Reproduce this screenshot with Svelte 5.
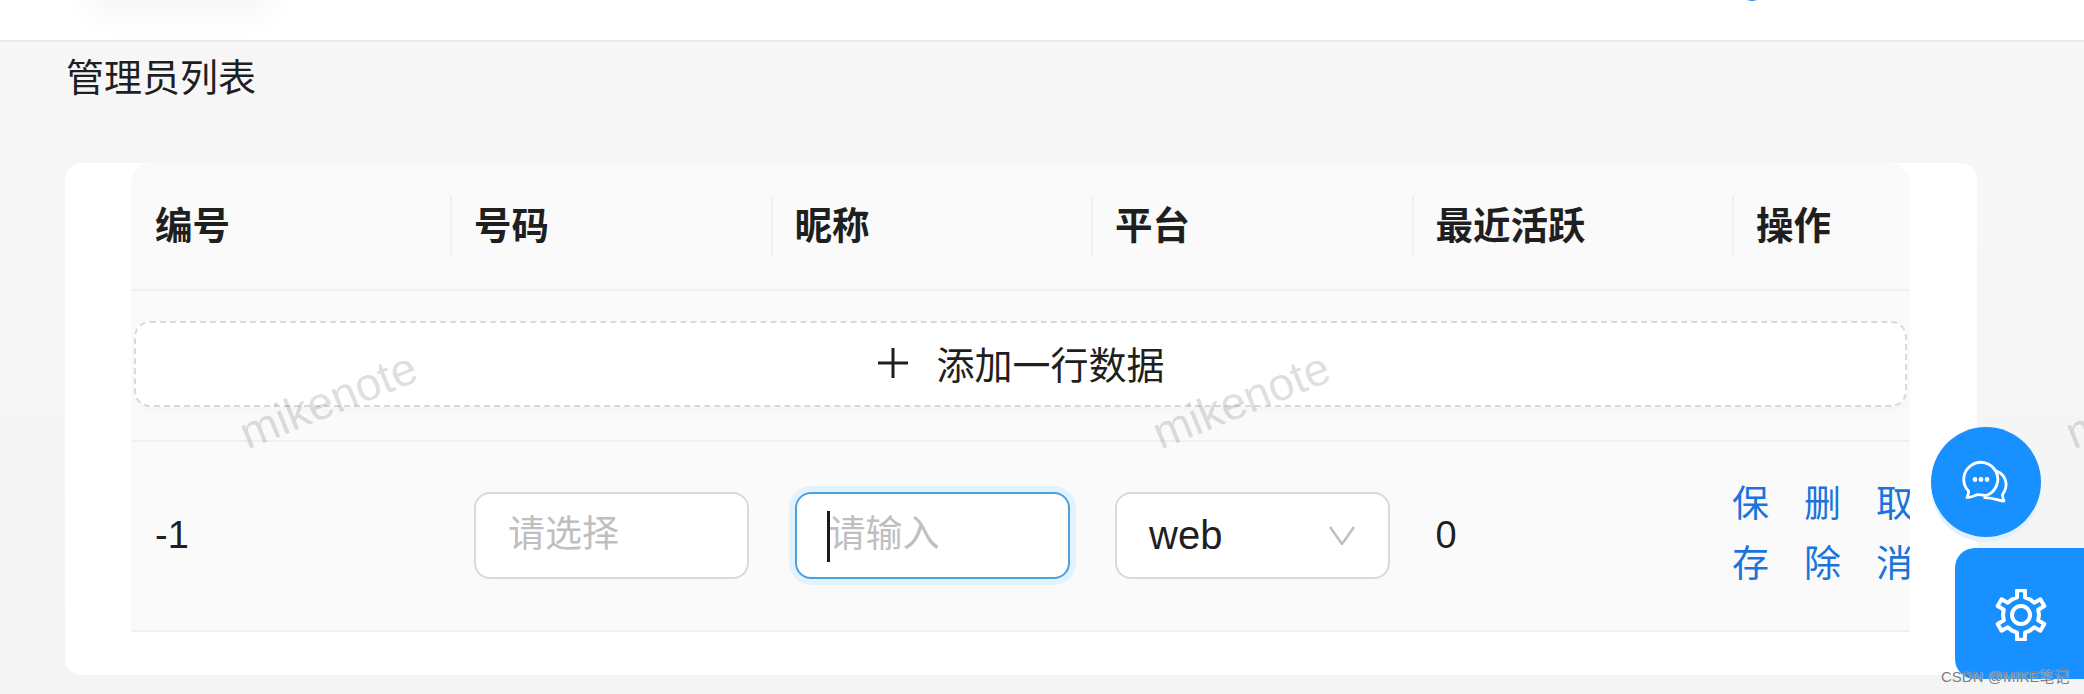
<script>
  const columns = ['编号', '号码', '昵称', '平台', '最近活跃', '操作'];
  const actions = ['保存', '删除', '取消'];
  const marks = [0, 1, 2];

  // six toothed cog outline, centre 26,26
  function gearPath() {
    const pts = [];
    for (let i = 0; i < 6; i++) {
      const a = -90 + i * 60;
      [[-30, 18], [-13, 18], [-9, 25], [9, 25], [13, 18]].forEach(([off, r]) => {
        const t = ((a + off) * Math.PI) / 180;
        pts.push((26 + r * Math.cos(t)).toFixed(1) + ' ' + (26 + r * Math.sin(t)).toFixed(1));
      });
    }
    return 'M' + pts.join('L') + 'Z';
  }
</script>

<div class="page">
  <header class="topbar">
    <div class="logo"></div>
    <div class="avatar"></div>
  </header>

  <main class="content">
    <h1>管理员列表</h1>

    <section class="card">
      <div class="table">
        <div class="row head">
          {#each columns as col, i}
            <div class="th" class:first={i === 0}>{col}</div>
          {/each}
        </div>

        <div class="add-wrap">
          <button class="add">
            <svg width="34" height="34" viewBox="0 0 34 34" aria-hidden="true">
              <path d="M17 2v30M2 17h30" stroke="#1f1f1f" stroke-width="3" fill="none" />
            </svg>
            <span>添加一行数据</span>
          </button>
        </div>

        <div class="row body">
          <div class="td">-1</div>
          <div class="td"><input class="field" placeholder="请选择" readonly /></div>
          <div class="td">
            <div class="focus-wrap">
              <input class="field focused" placeholder="请输入" readonly />
              <span class="caret"></span>
            </div>
          </div>
          <div class="td">
            <div class="field select">
              <span>web</span>
              <svg width="26" height="19" viewBox="0 0 26 19" aria-hidden="true">
                <path d="M1 1l12 17L25 1" stroke="#bfbfbf" stroke-width="2.5" fill="none" />
              </svg>
            </div>
          </div>
          <div class="td">0</div>
          <div class="td ops">
            {#each actions as a}
              <a href="#top">{a}</a>
            {/each}
          </div>
        </div>
      </div>
    </section>
  </main>

  {#each marks as m}
    <div class="watermark" style="left: {m * 913 + 220}px">mikenote</div>
  {/each}

  <button class="fab chat" aria-label="消息">
    <svg width="48" height="48" viewBox="0 0 48 48" fill="none" stroke="#fff" stroke-width="2.8" stroke-linejoin="round" stroke-linecap="round">
      <path d="M7.7 33.3A17 17 0 1 1 25 37.5C21 37.2 17 35.6 14 37.5C11 39 8 39.5 6 39.5C7 37.5 7.6 35.5 7.7 33.3Z" />
      <path d="M35.3 13A15 15 0 0 1 45 24.7C45.5 30 43.5 34 41.5 36.5C41.5 38.5 42 41 43 43C38 42.8 34 40 23.7 39.7" />
      <circle cx="14" cy="21.5" r="1" fill="#fff" />
      <circle cx="20" cy="21.5" r="1" fill="#fff" />
      <circle cx="26" cy="21.5" r="1" fill="#fff" />
    </svg>
  </button>
  <button class="fab gear" aria-label="设置">
    <svg width="52" height="52" viewBox="0 0 52 52" fill="none" stroke="#fff" stroke-width="4" stroke-linejoin="round">
      <path d={gearPath()} />
      <circle cx="26" cy="26" r="9" />
    </svg>
  </button>

  <div class="credit">CSDN @MIKE笔记</div>
</div>

<style>
  :global(body) {
    margin: 0;
    background: #f5f5f5;
  }
  .page {
    position: relative;
    width: 2084px;
    height: 694px;
    overflow: hidden;
    background: linear-gradient(#f7f7f7, #f4f4f4);
    color: #1f1f1f;
    font-family: "Liberation Sans", "Noto Sans CJK SC", sans-serif;
  }
  .topbar {
    position: relative;
    height: 40px;
    background: #fff;
    border-bottom: 2px solid #ececec;
    overflow: hidden;
  }
  .logo {
    position: absolute;
    left: 90px;
    top: -30px;
    width: 180px;
    height: 30px;
    box-shadow: 0 12px 34px rgba(0, 0, 0, 0.05);
  }
  .avatar {
    position: absolute;
    left: 1740px;
    top: -23px;
    width: 24px;
    height: 24px;
    border-radius: 50%;
    background: #3d8fdc;
  }
  .content {
    padding-left: 65px;
  }
  h1 {
    margin: 0 0 51px 1px;
    height: 70px;
    line-height: 72px;
    font-size: 38px;
    font-weight: 400;
  }
  .card {
    width: 1912px;
    height: 512px;
    padding: 0 67px 0 66px;
    box-sizing: border-box;
    background: #fff;
    border-radius: 16px;
  }
  .table {
    width: 1779px;
    background: #fafafa;
    border-radius: 20px 20px 0 0;
    overflow: hidden;
  }
  .row {
    display: grid;
    grid-template-columns: 319px repeat(4, 320.5px) 178px;
    align-items: center;
  }
  .head {
    height: 126px;
    border-bottom: 2px solid #f0f0f0;
    font-size: 37.5px;
    font-weight: 700;
  }
  .th {
    height: 61px;
    line-height: 61px;
    padding-left: 22px;
    border-left: 2px solid #f0f0f0;
    margin-top: 1px;
  }
  .th.first {
    border-left-color: transparent;
  }
  .add-wrap {
    padding: 30px 3px 33px;
    border-bottom: 2px solid #f0f0f0;
    height: 86px;
  }
  .add {
    display: flex;
    align-items: center;
    justify-content: center;
    gap: 26px;
    width: 100%;
    height: 86px;
    box-sizing: border-box;
    background: #fff;
    border: 2px dashed #d9d9d9;
    border-radius: 16px;
    box-shadow: 0 4px 6px rgba(0, 0, 0, 0.02);
    font: inherit;
    font-size: 38px;
    color: #1f1f1f;
    padding: 0 0 3px;
  }
  .body {
    height: 188px;
    border-bottom: 2px solid #f0f0f0;
    font-size: 38px;
  }
  .td {
    padding-left: 24px;
    margin-top: -2px;
  }
  .field {
    display: block;
    width: 275px;
    height: 87px;
    box-sizing: border-box;
    padding: 0 32px;
    background: #fff;
    border: 2px solid #d9d9d9;
    border-radius: 16px;
    font: inherit;
    font-size: 37px;
    color: #1f1f1f;
    outline: none;
  }
  .field::placeholder {
    color: #bfbfbf;
  }
  .focus-wrap {
    position: relative;
    width: 275px;
  }
  .focused {
    border-color: #4f9fdc;
    box-shadow: 0 0 0 6px #e2f2fe;
  }
  .caret {
    position: absolute;
    left: 32px;
    top: 19px;
    width: 3px;
    height: 51px;
    background: #1a1a1a;
  }
  .select {
    display: flex;
    align-items: center;
    justify-content: space-between;
    padding-right: 33px;
    font-size: 40px;
  }
  .ops {
    display: flex;
    gap: 35px;
    padding-left: 0;
    line-height: 60px;
  }
  .ops a {
    flex: none;
    width: 37px;
    color: #1a74dc;
    text-decoration: none;
    word-break: break-all;
    font-size: 37px;
  }
  .watermark {
    position: absolute;
    top: 372px;
    width: 216px;
    text-align: center;
    font-size: 46px;
    line-height: 56px;
    color: rgba(0, 0, 0, 0.14);
    transform: rotate(-22deg);
    pointer-events: none;
  }
  .fab {
    position: absolute;
    display: flex;
    align-items: center;
    justify-content: center;
    padding: 0;
    border: none;
    background: #1890ff;
  }
  .chat {
    left: 1931px;
    top: 427px;
    width: 110px;
    height: 110px;
    border-radius: 50%;
    box-shadow: 0 5px 0 #e4f1fd;
    padding-right: 2px;
  }
  .gear {
    left: 1955px;
    top: 548px;
    width: 129px;
    height: 131px;
    border-radius: 20px 0 0 20px;
    padding: 2px 0 0 3px;
  }
  .credit {
    position: absolute;
    left: 1941px;
    top: 668px;
    font-size: 15px;
    line-height: 18px;
    color: #7d7d7d;
    text-shadow: 0 0 1px #fff;
    white-space: nowrap;
  }
</style>
